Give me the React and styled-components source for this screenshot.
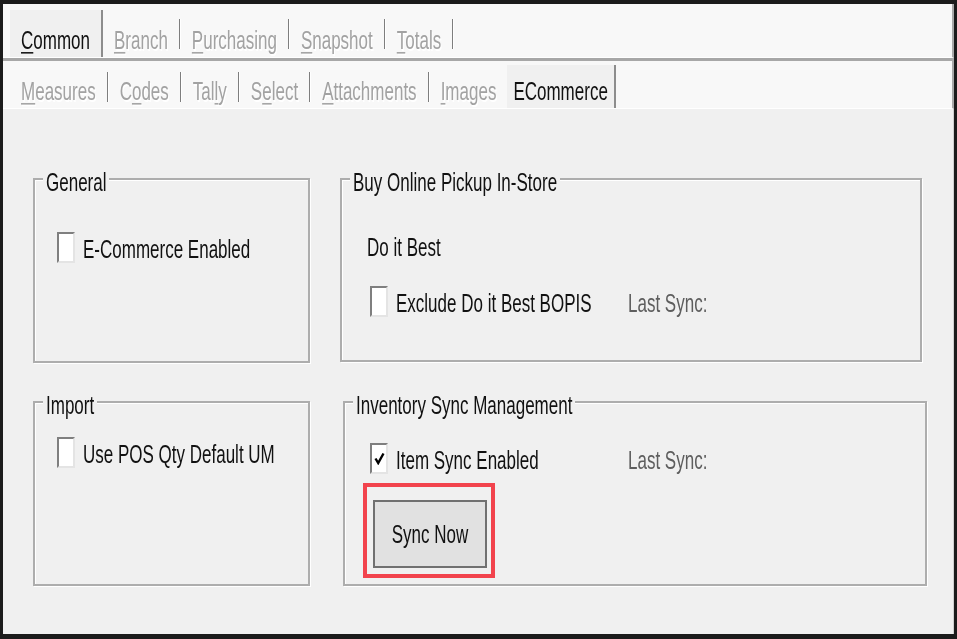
import React from "react";
import styled, { createGlobalStyle, css } from "styled-components";

const GlobalStyle = createGlobalStyle`
  html, body {
    margin: 0;
    padding: 0;
    background: #ffffff;
  }
  body {
    font-family: "Liberation Sans", Arial, sans-serif;
  }
  * {
    box-sizing: border-box;
  }
`;

// the old WinForms text in the shot is tall and narrow
const winText = css`
  display: inline-block;
  font-size: 17px;
  line-height: 21px;
  transform: scaleY(1.54);
  white-space: nowrap;
`;

const Window = styled.div`
  width: 957px;
  height: 639px;
  display: flex;
  flex-direction: column;
  border: 3px solid #1b1b1b;
  border-top-width: 4px;
  border-bottom-width: 5px;
  background: #f0f0f0;
  overflow: hidden;
`;

const TabStrip = styled.div`
  display: flex;
  align-items: stretch;
  height: ${(p) => p.$height}px;
  padding: ${(p) => p.$top}px 0 0 7px;
  background: #f8f8f8;
  border-bottom: 1px solid #ffffff;
  border-right: 2px solid #a9a9a9;
`;

const StripDivider = styled.div`
  height: 3px;
  background: #a7a7a7;
  border-right: 2px solid #a9a9a9;
`;

const Tab = styled.div`
  display: flex;
  align-items: flex-end;
  padding: 0 ${(p) => (p.$active ? p.$pad ?? 11 : 11)}px 6px;
  background: ${(p) => (p.$active ? "#f0f0f0" : "transparent")};
  border-right: ${(p) => (p.$active ? "2px solid #8d8d8d" : "none")};
`;

const TabLabel = styled.span`
  ${winText}
  color: ${(p) => (p.$active ? "#111111" : "#a2a2a2")};
  text-shadow: ${(p) => (p.$active ? "none" : "1px 1px 0 #ffffff")};

  u {
    text-decoration-thickness: 1px;
    text-underline-offset: 2px;
  }
`;

const TabDivider = styled.span`
  align-self: center;
  width: 2px;
  height: 30px;
  border-left: 1px solid #7e7e7e;
  border-right: 1px solid #ffffff;
`;

const Content = styled.div`
  flex: 1;
  display: grid;
  grid-template-columns: 277px 587px;
  grid-template-rows: 185px 185px;
  column-gap: 30px;
  row-gap: 38px;
  padding: 69px 0 0 30px;
  border-right: 1px solid #cfcfcf;
`;

const Group = styled.div`
  position: relative;
  display: flex;
  flex-direction: column;
  align-items: flex-start;
  margin: ${(p) => p.$margin || "0"};
  padding: ${(p) => p.$top}px 0 0 ${(p) => p.$left}px;
  border: 2px solid #adadad;
  box-shadow: 1px 1px 0 #ffffff, inset 1px 1px 0 #ffffff;
`;

const Caption = styled.span`
  ${winText}
  position: absolute;
  top: -8px;
  left: 8px;
  padding: 0 3px;
  background: #f0f0f0;
  color: #111111;
`;

const Note = styled.span`
  ${winText}
  margin-left: -3px;
  color: #111111;
`;

const OptionRow = styled.div`
  display: grid;
  grid-template-columns: ${(p) => (p.$aside ? "258px auto" : "auto")};
  align-items: center;
  height: 33px;
  margin-top: ${(p) => p.$gap || 0}px;
`;

const Check = styled.label`
  display: flex;
  align-items: center;
  gap: 8px;
`;

const Box = styled.span`
  flex-shrink: 0;
  display: flex;
  align-items: center;
  justify-content: center;
  width: 18px;
  height: 31px;
  background: #ffffff;
  border: 2px solid;
  border-color: #7f7f7f #e4e4e4 #e4e4e4 #7f7f7f;
`;

const CheckText = styled.span`
  ${winText}
  padding-top: 2px;
  color: #111111;
`;

const Muted = styled.span`
  ${winText}
  padding-top: 2px;
  color: #5e5e5e;
`;

const Highlight = styled.div`
  margin: 8px 0 0 -7px;
  padding: 13px 4px 6px 6px;
  border: 4px solid #f2434d;
`;

const Button = styled.button`
  display: flex;
  align-items: center;
  justify-content: center;
  width: 114px;
  height: 68px;
  padding: 0;
  background: #e1e1e1;
  border: 2px solid #707070;
  font: inherit;
  cursor: pointer;
`;

const ButtonText = styled.span`
  ${winText}
  color: #111111;
`;

const Tick = () => (
  <svg width="11" height="13" viewBox="0 0 11 13">
    <path d="M1.5 6.5 L4.2 11 L9.5 1.5" fill="none" stroke="#000" strokeWidth="2.4" />
  </svg>
);

const Checkbox = ({ checked, children }) => (
  <Check>
    <Box>{checked && <Tick />}</Box>
    <CheckText>{children}</CheckText>
  </Check>
);

const topTabs = [
  ["C", "ommon", true],
  ["B", "ranch"],
  ["P", "urchasing"],
  ["S", "napshot"],
  ["T", "otals"],
];

const subTabs = [
  ["", "M", "easures"],
  ["C", "o", "des"],
  ["Tal", "l", "y"],
  ["S", "e", "lect"],
  ["", "A", "ttachments"],
  ["", "I", "mages"],
];

const App = () => {
  return (
    <>
      <GlobalStyle />
      <Window>
        <TabStrip $height={54} $top={6}>
          {topTabs.map(([key, rest, active]) => (
            <React.Fragment key={key + rest}>
              <Tab $active={active}>
                <TabLabel $active={active}>
                  <u>{key}</u>
                  {rest}
                </TabLabel>
              </Tab>
              {!active && <TabDivider />}
            </React.Fragment>
          ))}
        </TabStrip>
        <StripDivider />
        <TabStrip $height={48} $top={4}>
          {subTabs.map(([pre, key, rest], i) => (
            <React.Fragment key={pre + key + rest}>
              <Tab>
                <TabLabel>
                  {pre}
                  <u>{key}</u>
                  {rest}
                </TabLabel>
              </Tab>
              {i < subTabs.length - 1 && <TabDivider />}
            </React.Fragment>
          ))}
          <Tab $active $pad={6}>
            <TabLabel $active>ECommerce</TabLabel>
          </Tab>
        </TabStrip>

        <Content>
          <Group $top={51} $left={22}>
            <Caption>General</Caption>
            <OptionRow>
              <Checkbox>E-Commerce Enabled</Checkbox>
            </OptionRow>
          </Group>

          <Group $top={57} $left={28} $margin="0 5px 1px 0">
            <Caption>Buy Online Pickup In-Store</Caption>
            <Note>Do it Best</Note>
            <OptionRow $aside $gap={27}>
              <Checkbox>Exclude Do it Best BOPIS</Checkbox>
              <Muted>Last Sync:</Muted>
            </OptionRow>
          </Group>

          <Group $top={33} $left={22}>
            <Caption>Import</Caption>
            <OptionRow>
              <Checkbox>Use POS Qty Default UM</Checkbox>
            </OptionRow>
          </Group>

          <Group $top={39} $left={25} $margin="0 0 0 3px">
            <Caption>Inventory Sync Management</Caption>
            <OptionRow $aside>
              <Checkbox checked>Item Sync Enabled</Checkbox>
              <Muted>Last Sync:</Muted>
            </OptionRow>
            <Highlight>
              <Button type="button">
                <ButtonText>Sync Now</ButtonText>
              </Button>
            </Highlight>
          </Group>
        </Content>
      </Window>
    </>
  );
};

export default App;
